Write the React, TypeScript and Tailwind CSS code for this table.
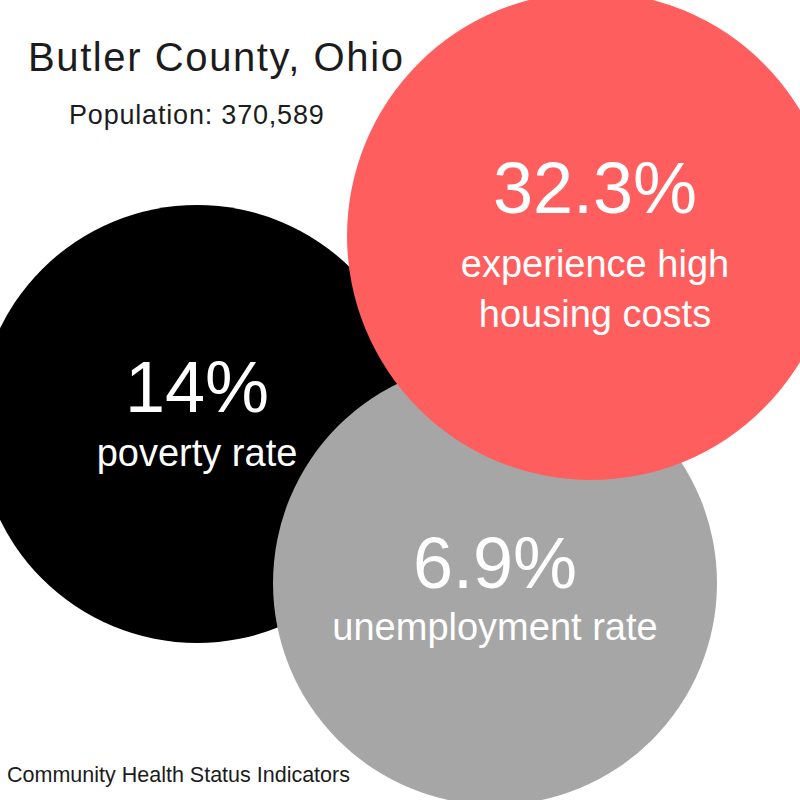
import React from "react";

export default function App() {
  return (
    <div className="relative w-[800px] h-[800px] overflow-hidden bg-white font-['Liberation_Sans',Arial,sans-serif] text-[#1c1c1c] flex flex-col">
      {/* Circles */}
      <div className="absolute left-[-22px] top-[205px] w-[438px] h-[438px] rounded-full bg-black z-0 flex flex-col items-center pt-[146px] text-white">
        <div className="text-[72px] leading-[72px]">14%</div>
        <div className="text-[38px] leading-[50px] mt-[5px]">poverty rate</div>
      </div>
      <div className="absolute left-[273px] top-[361px] w-[444px] h-[444px] rounded-full bg-[#a6a6a6] z-[1] flex flex-col items-center pt-[166px] text-white">
        <div className="text-[72px] leading-[72px]">6.9%</div>
        <div className="text-[38px] leading-[50px] mt-[3px]">unemployment rate</div>
      </div>
      <div className="absolute left-[347px] top-[-8px] w-[488px] h-[488px] rounded-full bg-[#ff5e5e] z-[2] flex flex-col items-center pt-[160px] pl-[8px] text-white">
        <div className="text-[72px] leading-[72px]">32.3%</div>
        <div className="text-[38px] leading-[50px] mt-[15px] text-center">
          experience high
          <br />
          housing costs
        </div>
      </div>

      {/* Heading */}
      <div className="relative z-10 pt-[37px]">
        <div className="pl-[28px] text-[40px] leading-[40px] tracking-[0.04em]">Butler County, Ohio</div>
        <div className="pl-[69px] mt-[25px] text-[27px] leading-[27px] tracking-[0.03em]">Population: 370,589</div>
      </div>

      {/* Footer */}
      <div className="relative z-10 mt-auto pb-[14px] pl-[7px] text-[21.5px] leading-[22px]">
        Community Health Status Indicators
      </div>
    </div>
  );
}
